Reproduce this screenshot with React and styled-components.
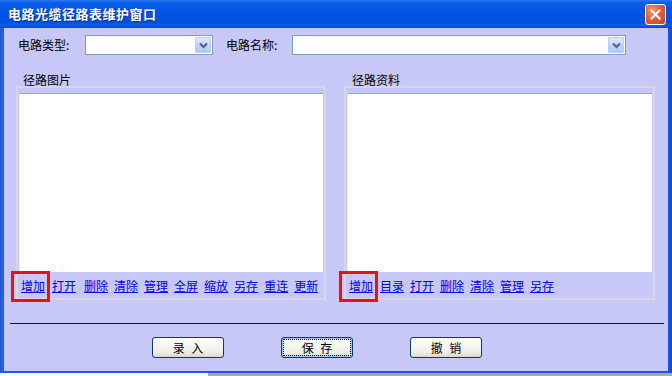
import React from 'react';
import styled, { createGlobalStyle } from 'styled-components';

const Global = createGlobalStyle`
  html, body { margin: 0; padding: 0; background: #ffffff; }
  body { font-family: "Noto Sans CJK SC", "Noto Sans", sans-serif; font-size: 12px; }
  * { box-sizing: border-box; }
`;

const Page = styled.div`
  width: 672px;
  height: 376px;
  display: flex;
  flex-direction: column;
  overflow: hidden;
`;

const Window = styled.div`
  width: 672px;
  height: 373px;
  flex: none;
  display: flex;
  flex-direction: column;
  background: linear-gradient(to right, #1a4fd0 0, #2b66e4 2px, #1c57da 4px, #1c57da 668px, #1748c4 100%);
`;

const TitleBar = styled.div`
  height: 28px;
  flex: none;
  display: flex;
  align-items: center;
  justify-content: space-between;
  padding: 0 6px 0 8px;
  background: linear-gradient(to bottom, #2a7af2 0%, #0a5be8 10%, #0054e3 45%, #0050de 80%, #0a60ee 90%, #0046cc 100%);
`;

const Title = styled.div`
  color: #ffffff;
  font-weight: bold;
  font-size: 13px;
  line-height: 16px;
  letter-spacing: 0.5px;
  text-shadow: 1px 1px 0 #0a2a8a;
  white-space: nowrap;
`;

const CloseButton = styled.div`
  width: 21px;
  height: 21px;
  border: 1px solid #ffffff;
  border-radius: 3px;
  background: radial-gradient(circle at 35% 30%, #f49a7a 0%, #e2603a 45%, #c6421c 100%);
  display: flex;
  align-items: center;
  justify-content: center;
`;

const Body = styled.div`
  flex: 1;
  margin: 0 4px 2px 4px;
  background: #c8c8f8;
  display: flex;
  flex-direction: column;
`;

const FieldRow = styled.div`
  display: flex;
  align-items: center;
  padding: 7px 0 0 14px;
  height: 27px;
`;

const Label = styled.div`
  width: ${p => p.$w}px;
  flex: none;
  color: #000;
  line-height: 14px;
  white-space: nowrap;
`;

const Combo = styled.div`
  width: ${p => p.$w}px;
  height: 20px;
  flex: none;
  background: #ffffff;
  border: 1px solid #7f9db9;
  display: flex;
  justify-content: flex-end;
  align-items: center;
  padding: 1px;
  margin-right: ${p => p.$mr || 0}px;
`;

const ComboArrow = styled.div`
  width: 16px;
  height: 16px;
  border-radius: 1px;
  background: linear-gradient(to bottom, #dfe8fd 0%, #c2d3fb 50%, #b4c8f6 100%);
  border: 1px solid #bccdf3;
  display: flex;
  align-items: center;
  justify-content: center;
`;

const Groups = styled.div`
  display: grid;
  grid-template-columns: 310px 311px;
  column-gap: 18px;
  padding-left: 12px;
  margin-top: 19px;
`;

const Group = styled.div`
  display: flex;
  flex-direction: column;
`;

const Caption = styled.div`
  line-height: 12px;
  height: 12px;
  padding-left: ${p => p.$pl}px;
  color: #000;
  white-space: nowrap;
`;

const Frame = styled.div`
  border: 2px solid #d6d6e8;
  padding: 5px 1px 4px 1px;
  display: flex;
  flex-direction: column;
`;

const PictureBox = styled.div`
  height: 179px;
  background: #ffffff;
  border-top: 1px solid #98a4d2;
  border-left: 1px solid #e8ecf8;
`;

const LinkRow = styled.div`
  display: flex;
  gap: 6px;
  padding-left: 2px;
  margin-top: 6px;
  height: 16px;
  align-items: center;
`;

const Link = styled.a`
  color: #0000ee;
  text-decoration: underline;
  line-height: 14px;
  white-space: nowrap;
  position: relative;
  cursor: pointer;
  margin-right: ${p => p.$mr || 0}px;

  ${p => p.$marked && `
    &::after {
      content: "";
      position: absolute;
      left: -10px;
      right: -5px;
      top: -8px;
      bottom: -9px;
      border: 3px solid #e8101a;
    }
  `}
`;

const Separator = styled.div`
  height: 1px;
  background: #1a1a2a;
  margin: 23px 4px 0 6px;
`;

const ButtonRow = styled.div`
  display: flex;
  gap: 57px;
  padding-left: 148px;
  margin-top: 13px;
`;

const Button = styled.div`
  width: 72px;
  height: 21px;
  border: 1px solid #003c74;
  border-radius: 3px;
  background: linear-gradient(to bottom, #ffffff 0%, #f6f5f0 40%, #ecebe4 80%, #d9d5c8 100%);
  display: flex;
  align-items: center;
  justify-content: center;
  padding: 2px;
  box-shadow: ${p => p.$focus ? 'inset 0 0 0 1px #a6c3ef' : 'none'};
`;

const ButtonFace = styled.div`
  width: 100%;
  height: 100%;
  display: flex;
  align-items: center;
  justify-content: center;
  color: #000;
  line-height: 14px;
  letter-spacing: 2px;
  padding-left: 2px;
  outline: ${p => p.$focus ? '1px dotted #000' : 'none'};
`;

const ShadowStrip = styled.div`
  flex: 1;
  display: flex;
`;

const WhiteGap = styled.div`
  width: 208px;
  background: #ffffff;
`;

const GrayGap = styled.div`
  flex: 1;
  background: #a8a8a8;
`;

const Chevron = () => (
  <svg width="9" height="7" viewBox="0 0 9 7">
    <path d="M1 1.5 L4.5 5 L8 1.5" fill="none" stroke="#4d6185" strokeWidth="2" />
  </svg>
);

const leftLinks = ['打开', '删除', '清除', '管理', '全屏', '缩放', '另存', '重连', '更新'];
const rightLinks = ['目录', '打开', '删除', '清除', '管理', '另存'];

export default function App() {
  return (
    <Page>
      <Global />
      <Window>
        <TitleBar>
          <Title>电路光缆径路表维护窗口</Title>
          <CloseButton>
            <svg width="11" height="11" viewBox="0 0 11 11">
              <path d="M1.5 1.5 L9.5 9.5 M9.5 1.5 L1.5 9.5" stroke="#ffffff" strokeWidth="2" strokeLinecap="square" />
            </svg>
          </CloseButton>
        </TitleBar>
        <Body>
          <FieldRow>
            <Label $w={67}>电路类型:</Label>
            <Combo $w={128} $mr={13}><ComboArrow><Chevron /></ComboArrow></Combo>
            <Label $w={66}>电路名称:</Label>
            <Combo $w={334}><ComboArrow><Chevron /></ComboArrow></Combo>
          </FieldRow>
          <Groups>
            <Group>
              <Caption $pl={7}>径路图片</Caption>
              <Frame>
                <PictureBox />
                <LinkRow>
                  <Link $marked $mr={1}>增加</Link>
                  {leftLinks.map((t, i) => (
                    <Link key={i} $mr={i === 0 ? 2 : 0}>{t}</Link>
                  ))}
                </LinkRow>
              </Frame>
            </Group>
            <Group>
              <Caption $pl={8}>径路资料</Caption>
              <Frame>
                <PictureBox />
                <LinkRow>
                  <Link $marked $mr={1}>增加</Link>
                  {rightLinks.map((t, i) => (
                    <Link key={i}>{t}</Link>
                  ))}
                </LinkRow>
              </Frame>
            </Group>
          </Groups>
          <Separator />
          <ButtonRow>
            <Button><ButtonFace>录 入</ButtonFace></Button>
            <Button $focus><ButtonFace $focus>保 存</ButtonFace></Button>
            <Button><ButtonFace>撤 销</ButtonFace></Button>
          </ButtonRow>
        </Body>
      </Window>
      <ShadowStrip>
        <WhiteGap />
        <GrayGap />
      </ShadowStrip>
    </Page>
  );
}
